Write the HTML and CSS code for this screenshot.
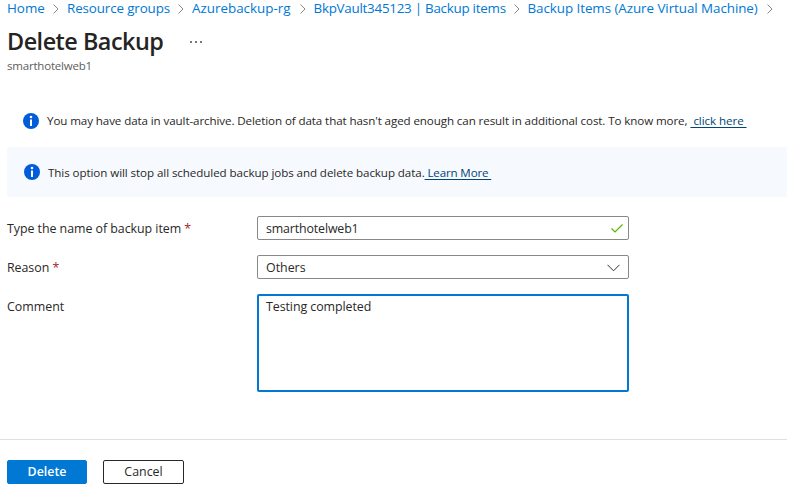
FILE: index.html
```html
<!DOCTYPE html>
<html lang="en">
<head>
<meta charset="utf-8">
<title>Delete Backup</title>
<link rel="stylesheet" href="styles.css">
</head>
<body>
<nav class="crumbs">
  <span class="crumb"><a>Home</a><svg class="sep" viewBox="0 0 6 10"><path d="M.5 .5 5 5 .5 9.500"/></svg></span>
  <span class="crumb"><a class="crumb-groups">Resource groups</a><svg class="sep" viewBox="0 0 6 10"><path d="M.5 .5 5 5 .5 9.500"/></svg></span>
  <span class="crumb"><a>Azurebackup-rg</a><svg class="sep" viewBox="0 0 6 10"><path d="M.5 .5 5 5 .5 9.500"/></svg></span>
  <span class="crumb"><a class="crumb-vault">BkpVault345123 | Backup items</a><svg class="sep" viewBox="0 0 6 10"><path d="M.5 .5 5 5 .5 9.500"/></svg></span>
  <span class="crumb"><a class="crumb-items">Backup Items (Azure Virtual Machine)</a><svg class="sep" viewBox="0 0 6 10"><path d="M.5 .5 5 5 .5 9.500"/></svg></span>
</nav>
<header class="header">
  <div class="title-row">
    <h1>Delete Backup</h1>
    <svg class="more" viewBox="0 0 12 2"><path d="M0 0h2v2H0zM5 0h2v2H5zM10 0h2v2h-2z"/></svg>
  </div>
  <p class="subtitle">smarthotelweb1</p>
</header>
<div class="notice notice-archive">
  <svg class="info" viewBox="0 0 16 16"><circle cx="8" cy="8" r="8"/><circle class="mark" cx="8" cy="4" r="1.300"/><path class="mark" d="M7 6.500h2V13H7z"/></svg>
  <p><span class="archive-text">You may have data in vault-archive. Deletion of data that hasn't aged enough can result in additional cost. To know more,</span> <a class="link-click">&nbsp;click here&nbsp;</a></p>
</div>
<div class="notice notice-stop">
  <svg class="info" viewBox="0 0 16 16"><circle cx="8" cy="8" r="8"/><circle class="mark" cx="8" cy="4" r="1.300"/><path class="mark" d="M7 6.500h2V13H7z"/></svg>
  <p><span class="stop-text">This option will stop all scheduled backup jobs and delete backup data.</span><a class="link-learn">&nbsp;Learn More&nbsp;</a></p>
</div>
<main class="form">
  <label><span class="label-name">Type the name of backup item</span> <b>*</b></label>
  <div class="field"><span class="val-name">smarthotelweb1</span><svg class="check" viewBox="0 0 12 9"><path d="M.5 4.500 4 8 11.500 .5"/></svg></div>
  <label><span class="label-name">Reason</span> <b>*</b></label>
  <div class="field"><span>Others</span><svg class="arrow" viewBox="0 0 13 8"><path d="M.5 .8 6.500 6.800 12.500 .8"/></svg></div>
  <label>Comment</label>
  <div class="field comment"><span class="val-comment">Testing completed</span></div>
</main>
<footer class="footer">
  <button class="btn primary">Delete</button>
  <button class="btn">Cancel</button>
</footer>
</body>
</html>
```
FILE: styles.css
```css
* { box-sizing: border-box; }
body {
  margin: 0;
  height: 490px;
  overflow: hidden;
  background: #fff;
  color: #292827;
  font: 12.4px/18px "Open Sans", "Noto Sans", sans-serif;
}
p, h1 { margin: 0; }
svg { display: block; flex: none; fill: none; }
.crumbs {
  display: grid;
  grid-template-columns: 60px 125px 121.500px 214px 245px;
  height: 18px;
  padding-left: 7px;
  color: #0078d4;
  font-size: 13.4px;
  line-height: 17px;
  white-space: nowrap;
}
.crumb { display: flex; justify-content: space-between; padding-right: 8px; }
.crumb:last-child { padding-right: 0; }
.crumb-groups { letter-spacing: -.13px; }
.crumb-vault { letter-spacing: -.26px; }
.crumb-items { letter-spacing: -.06px; }
.sep { width: 6px; height: 10px; margin-top: 4px; stroke: #8a8886; }
.header { height: 82px; padding: 7px 7px 0; }
.title-row { display: flex; height: 33px; }
h1 {
  width: 183px;
  color: #252423;
  font-size: 23.400px;
  font-weight: 600;
  letter-spacing: -.5px;
  line-height: 33px;
  white-space: nowrap;
}
.more { width: 12px; height: 2px; margin-top: 16px; fill: #777; }
.subtitle { color: #605e5c; font-size: 11.500px; line-height: 16px; letter-spacing: -.2px; }
.notice { display: flex; align-items: center; white-space: nowrap; font-size: 11.600px; }
.notice p { line-height: 18px; }
.notice-archive { height: 41px; padding-left: 23px; gap: 8px; }
.notice-stop {
  height: 50px;
  margin: 6px 0 0 7px;
  padding-left: 17px;
  gap: 8px;
  background: #f6faff;
  border-radius: 2px 0 0 2px;
}
.notice-stop p { padding-top: 1px; }
.archive-text { letter-spacing: -.1px; }
.stop-text { letter-spacing: -.08px; }
.link-click { letter-spacing: -.07px; }
.link-learn { letter-spacing: -.16px; }
.notice a { color: #004578; text-decoration: underline; text-underline-offset: 2px; }
.info { width: 16px; height: 16px; fill: #015cda; }
.mark { fill: #fff; }
.form {
  display: grid;
  grid-template-columns: 250px 372px;
  grid-template-rows: 24px 24px 98px;
  row-gap: 15px;
  margin: 19px 0 0 7px;
}
label { line-height: 26px; white-space: nowrap; }
label b { color: #a4262c; font-weight: 400; }
.label-name { letter-spacing: -.04px; }
.val-name { letter-spacing: -.14px; }
.val-comment { letter-spacing: -.06px; }
.field {
  display: flex;
  justify-content: space-between;
  padding: 0 8px;
  border: 1px solid #8a8886;
  border-radius: 2px;
  line-height: 24px;
}
.check { width: 12px; height: 9px; margin: 7px -3px 0 0; stroke: #5db300; stroke-width: 1.200; }
.arrow { width: 13px; height: 8px; margin-top: 8px; stroke: #323130; }
.comment { border: 2px solid #0078d4; padding: 0 7px; line-height: 22px; }
.footer {
  display: flex;
  gap: 16px;
  height: 51px;
  margin-top: 47px;
  padding: 20px 7px 0;
  border-top: 1px solid #dfdfdf;
}
.btn {
  width: 81px;
  height: 24px;
  padding: 0;
  border: 1px solid #292827;
  border-radius: 2px;
  background: #fff;
  color: #292827;
  font: 12.4px/20px "Open Sans", "Noto Sans", sans-serif;
}
.primary { width: 80px; border-color: #0078d4; background: #0078d4; color: #fff; font-weight: 600; }
```
